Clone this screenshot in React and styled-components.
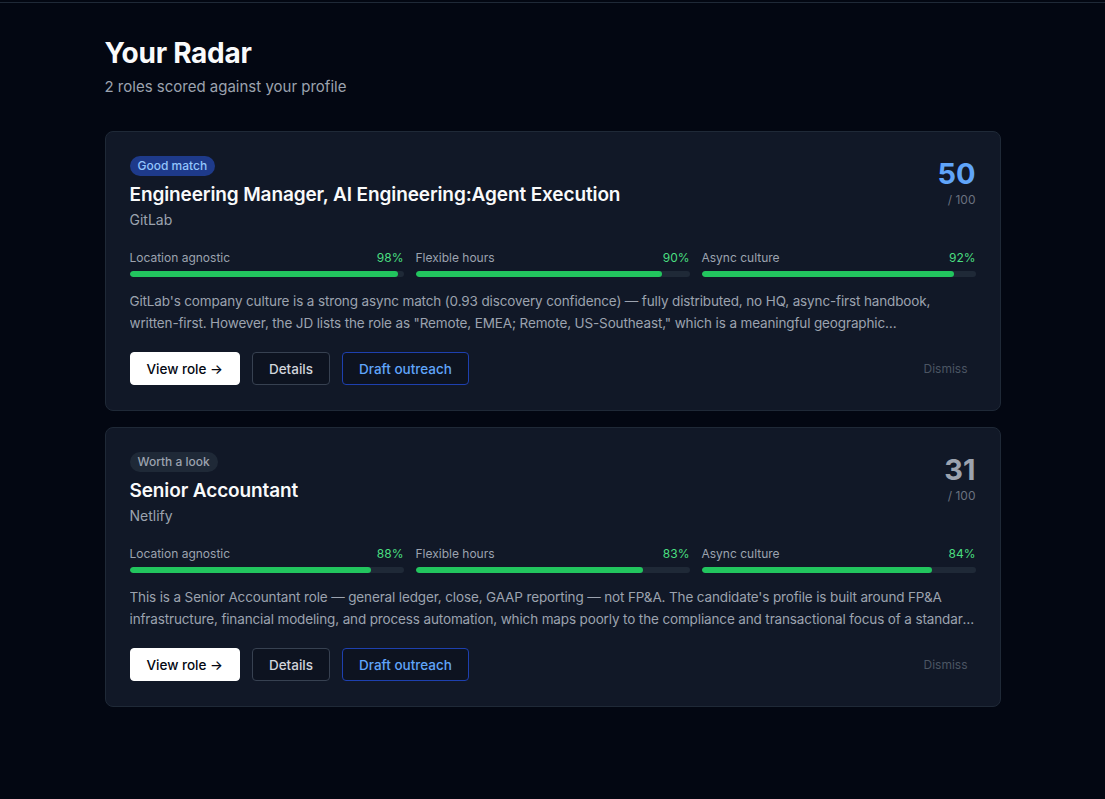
import styled, { createGlobalStyle } from "styled-components";

const GlobalStyle = createGlobalStyle`
  html, body {
    margin: 0;
    padding: 0;
    background: #030712;
    font-family: Inter, "Noto Sans", sans-serif;
    -webkit-font-smoothing: antialiased;
  }
  * { box-sizing: border-box; }
`;

const TopLine = styled.div`
  height: 3px;
  border-bottom: 1px solid #1f2937;
`;

const Page = styled.main`
  min-height: 796px;
  background: #030712;
`;

const Container = styled.div`
  max-width: 896px;
  margin: 0 auto;
  padding: 32px 0 48px;
`;

const Heading = styled.h1`
  margin: 0;
  font-size: 28px;
  line-height: 36px;
  font-weight: 700;
  color: #f9fafb;
  letter-spacing: -0.01em;
`;

const Sub = styled.p`
  margin: 4px 0 0;
  font-size: 15px;
  line-height: 24px;
  color: #9ca3af;
`;

const List = styled.div`
  margin-top: 32px;
  display: flex;
  flex-direction: column;
  gap: 16px;
`;

const Card = styled.article`
  background: #111827;
  border: 1px solid #1f2937;
  border-radius: 8px;
  padding: 24px 24px 25px;
`;

const Head = styled.div`
  display: flex;
  justify-content: space-between;
  align-items: flex-start;
  gap: 16px;
`;

const Badge = styled.span`
  display: block;
  width: fit-content;
  height: 20px;
  padding: 0 8px;
  border-radius: 9999px;
  font-size: 12px;
  line-height: 20px;
  font-weight: 500;
  background: ${(p) => (p.$tone === "good" ? "#1e3a8a" : "#1f2937")};
  color: ${(p) => (p.$tone === "good" ? "#93c5fd" : "#9ca3af")};
`;

const Title = styled.h2`
  margin: 5px 0 0;
  font-size: 19px;
  line-height: 28px;
  font-weight: 600;
  letter-spacing: -0.006em;
  color: #f9fafb;
`;

const Company = styled.div`
  margin-top: 1px;
  font-size: 14px;
  line-height: 20px;
  color: #9ca3af;
`;

const Score = styled.div`
  text-align: right;
  flex-shrink: 0;
`;

const ScoreNum = styled.div`
  font-size: 29px;
  line-height: 36px;
  font-weight: 700;
  color: ${(p) => p.$color};
`;

const ScoreMax = styled.div`
  font-size: 12px;
  line-height: 16px;
  color: #6b7280;
`;

const Bars = styled.div`
  margin-top: 20px;
  display: grid;
  grid-template-columns: repeat(3, 1fr);
  gap: 12px;
`;

const BarLabel = styled.div`
  display: flex;
  justify-content: space-between;
  font-size: 12px;
  line-height: 16px;
  color: #9ca3af;

  span:last-child {
    color: #4ade80;
  }
`;

const Track = styled.div`
  margin-top: 5px;
  height: 6px;
  border-radius: 9999px;
  background: #1f2937;
  overflow: hidden;
`;

const Fill = styled.div`
  height: 100%;
  border-radius: 9999px;
  background: #22c55e;
`;

const Desc = styled.p`
  margin: 13px 0 0;
  font-size: 13.5px;
  line-height: 22px;
  letter-spacing: -0.01em;
  color: #9ca3af;
  display: -webkit-box;
  -webkit-line-clamp: 2;
  -webkit-box-orient: vertical;
  overflow: hidden;
`;

const NoBreak = styled.span`
  white-space: nowrap;
`;

const Actions = styled.div`
  margin-top: 18px;
  display: flex;
  align-items: center;
  gap: 12px;
`;

const Button = styled.button`
  height: 33px;
  padding: 0 16px;
  border-radius: 4px;
  font-family: inherit;
  font-size: 13.5px;
  font-weight: 500;
  cursor: pointer;
  border: 1px solid
    ${(p) =>
      p.$variant === "primary"
        ? "#ffffff"
        : p.$variant === "blue"
        ? "#1e40af"
        : "#374151"};
  background: ${(p) => (p.$variant === "primary" ? "#ffffff" : "#0d1320")};
  color: ${(p) =>
    p.$variant === "primary"
      ? "#030712"
      : p.$variant === "blue"
      ? "#60a5fa"
      : "#d1d5db"};
`;

const Dismiss = styled.button`
  margin-left: auto;
  padding: 4px 8px;
  background: none;
  border: none;
  font-family: inherit;
  font-size: 12px;
  color: #4b5563;
  cursor: pointer;
`;

const roles = [
  {
    badge: "Good match",
    tone: "good",
    title: "Engineering Manager, AI Engineering:Agent Execution",
    company: "GitLab",
    score: 50,
    scoreColor: "#60a5fa",
    bars: [
      ["Location agnostic", 98],
      ["Flexible hours", 90],
      ["Async culture", 92],
    ],
    desc: (
      <>
        GitLab's company culture is a strong async match (0.93 discovery
        confidence) — fully distributed, no HQ, <NoBreak>async-first</NoBreak>{" "}
        handbook, <NoBreak>written-first.</NoBreak> However, the JD lists the
        role as "Remote, EMEA; Remote, US-Southeast," which is a meaningful
        geographic…
      </>
    ),
  },
  {
    badge: "Worth a look",
    tone: "neutral",
    title: "Senior Accountant",
    company: "Netlify",
    score: 31,
    scoreColor: "#9ca3af",
    bars: [
      ["Location agnostic", 88],
      ["Flexible hours", 83],
      ["Async culture", 84],
    ],
    desc: "This is a Senior Accountant role — general ledger, close, GAAP reporting — not FP&A. The candidate's profile is built around FP&A infrastructure, financial modeling, and process automation, which maps poorly to the compliance and transactional focus of a standard accounting seat.",
  },
];

export default function App() {
  return (
    <>
      <GlobalStyle />
      <TopLine />
      <Page>
        <Container>
          <Heading>Your Radar</Heading>
          <Sub>2 roles scored against your profile</Sub>
          <List>
            {roles.map((r) => (
              <Card key={r.title}>
                <Head>
                  <div>
                    <Badge $tone={r.tone}>{r.badge}</Badge>
                    <Title>{r.title}</Title>
                    <Company>{r.company}</Company>
                  </div>
                  <Score>
                    <ScoreNum $color={r.scoreColor}>{r.score}</ScoreNum>
                    <ScoreMax>/ 100</ScoreMax>
                  </Score>
                </Head>
                <Bars>
                  {r.bars.map(([label, v]) => (
                    <div key={label}>
                      <BarLabel>
                        <span>{label}</span>
                        <span>{v}%</span>
                      </BarLabel>
                      <Track>
                        <Fill style={{ width: `${v}%` }} />
                      </Track>
                    </div>
                  ))}
                </Bars>
                <Desc>{r.desc}</Desc>
                <Actions>
                  <Button $variant="primary">View role →</Button>
                  <Button>Details</Button>
                  <Button $variant="blue">Draft outreach</Button>
                  <Dismiss>Dismiss</Dismiss>
                </Actions>
              </Card>
            ))}
          </List>
        </Container>
      </Page>
    </>
  );
}
